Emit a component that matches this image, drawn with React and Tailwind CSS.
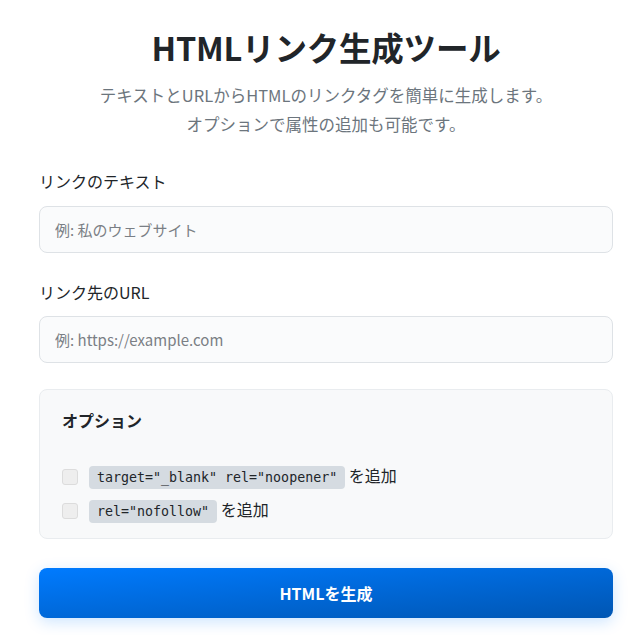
import { useState } from "react";

export default function App() {
  const [text, setText] = useState("");
  const [url, setUrl] = useState("");
  const [blank, setBlank] = useState(false);
  const [nofollow, setNofollow] = useState(false);

  return (
    <div className="min-h-[635px] bg-white font-['Noto_Sans_CJK_JP','Noto_Sans',sans-serif] text-[#212529]">
      <div className="ml-[39px] w-[574px] pt-[26px]">
        {/* Header */}
        <h1 className="text-center text-[32.5px] font-bold leading-[42px] tracking-[-0.2px] text-[#212529]">
          HTMLリンク生成ツール
        </h1>
        <p className="mt-[13px] text-center text-[16.5px] leading-[29px] text-[#6c757d]">
          テキストとURLからHTMLのリンクタグを簡単に生成します。
          <br />
          オプションで属性の追加も可能です。
        </p>

        {/* Link text */}
        <div className="mt-[30px]">
          <label className="block text-[16px] leading-[24px]">リンクのテキスト</label>
          <input
            value={text}
            onChange={(e) => setText(e.target.value)}
            placeholder="例: 私のウェブサイト"
            className="mt-[13px] block h-[47px] w-full rounded-[8px] border border-[#dee2e6] bg-[#fafbfc] px-[15px] text-[15px] placeholder:text-[#7a7f85] outline-none"
          />
        </div>

        {/* URL */}
        <div className="mt-[27px]">
          <label className="block text-[16px] leading-[24px]">リンク先のURL</label>
          <input
            value={url}
            onChange={(e) => setUrl(e.target.value)}
            placeholder="例: https://example.com"
            className="mt-[12px] block h-[47px] w-full rounded-[8px] border border-[#dee2e6] bg-[#fafbfc] px-[15px] text-[15px] placeholder:text-[#7a7f85] outline-none"
          />
        </div>

        {/* Options */}
        <div className="mt-[26px] rounded-[8px] border border-[#e9ecef] bg-[#f8f9fa] px-[22px] pt-[18px] pb-[13px]">
          <h3 className="text-[16px] font-bold leading-[24px]">オプション</h3>
          <div className="mt-[30px] flex flex-col gap-[5px]">
            <label className="flex items-center gap-[11px] text-[16px] leading-[26px]">
              <input
                type="checkbox"
                checked={blank}
                onChange={() => setBlank(!blank)}
                className="h-[16px] w-[16px] appearance-none rounded-[3px] border border-[#dcdcdc] bg-[#eeeeee]"
              />
              <span>
                <code className="rounded-[4px] bg-[#d5dbe1] px-[8px] py-[4px] font-['DejaVu_Sans_Mono',monospace] text-[13.3px] text-[#212529]">
                  target="_blank" rel="noopener"
                </code>{" "}
                を追加
              </span>
            </label>
            <label className="flex items-center gap-[11px] text-[16px] leading-[26px]">
              <input
                type="checkbox"
                checked={nofollow}
                onChange={() => setNofollow(!nofollow)}
                className="h-[16px] w-[16px] appearance-none rounded-[3px] border border-[#dcdcdc] bg-[#eeeeee]"
              />
              <span>
                <code className="rounded-[4px] bg-[#d5dbe1] px-[8px] py-[4px] font-['DejaVu_Sans_Mono',monospace] text-[13.3px] text-[#212529]">
                  rel="nofollow"
                </code>{" "}
                を追加
              </span>
            </label>
          </div>
        </div>

        {/* Button */}
        <button className="mt-[29px] flex h-[50px] w-full items-center justify-center rounded-[8px] bg-gradient-to-br from-[#007bff] to-[#0056b3] text-[16px] font-bold text-white shadow-[0_4px_15px_rgba(0,123,255,0.2)]">
          HTMLを生成
        </button>
      </div>
    </div>
  );
}
